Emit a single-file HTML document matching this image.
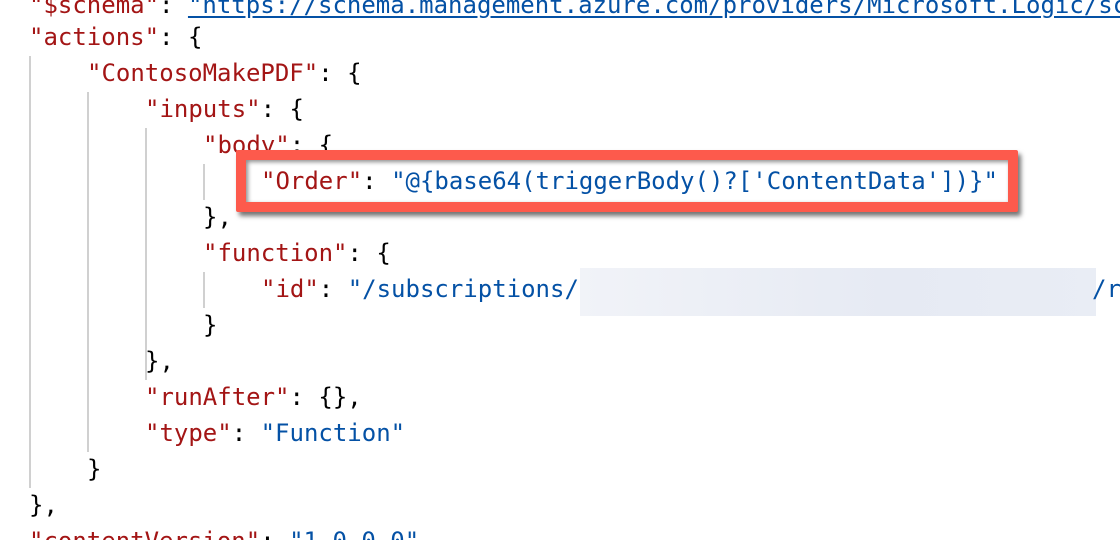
<!DOCTYPE html>
<html><head><meta charset="utf-8"><style>
html,body{margin:0;padding:0;background:#fff;width:1120px;height:540px;overflow:hidden;position:relative}
.l{position:absolute;left:0;height:36px;line-height:36px;font-family:"DejaVu Sans Mono","Liberation Mono",monospace;font-size:24px;white-space:pre;color:#000}
.k{color:#a31515}.s{color:#0451a5}
.u{color:#0451a5;text-decoration:underline;text-underline-offset:3px}
.g{position:absolute;width:2px;background:#d0d0d0}
</style></head><body>
<div class="g" style="left:29px;top:56px;height:432px"></div>
<div class="g" style="left:87px;top:92px;height:360px"></div>
<div class="g" style="left:145px;top:128px;height:252px"></div>
<div class="g" style="left:203px;top:164px;height:36px"></div>
<div class="g" style="left:203px;top:272px;height:36px"></div>

<div class="l" style="top:-13px;left:29px"><span class="k">"$schema"</span>: <span class="u">"https://schema.management.azure.com/providers/Microsoft.Logic/sc</span></div>
<div class="l" style="top:19px;left:29px"><span class="k">"actions"</span>: {</div>
<div class="l" style="top:55px;left:87px"><span class="k">"ContosoMakePDF"</span>: {</div>
<div class="l" style="top:91px;left:145px"><span class="k">"inputs"</span>: {</div>
<div class="l" style="top:127px;left:203px"><span class="k">"body"</span>: {</div>

<div style="position:absolute;left:236px;top:150px;width:762px;height:42px;border:10px solid #fd5a4c;border-radius:2px;background:#fff;box-shadow:3px 4px 5px rgba(0,0,0,.55), inset 2px 2px 4px rgba(0,0,0,.45)"></div>
<div class="l" style="top:163px;left:261px"><span class="k">"Order"</span>: <span class="s">"@{base64(triggerBody()?['ContentData'])}"</span></div>

<div class="l" style="top:199px;left:203px">},</div>
<div class="l" style="top:235px;left:203px"><span class="k">"function"</span>: {</div>
<div class="l" style="top:271px;left:261px"><span class="k">"id"</span>: <span class="s">"/subscriptions/</span></div>
<div style="position:absolute;left:580px;top:268px;width:516px;height:48px;background:linear-gradient(90deg,#f1f3f8,#e6eaf3 60%,#e9edf5)"></div>
<div class="l" style="top:271px;left:1092px"><span class="s">/r</span></div>
<div class="l" style="top:307px;left:203px">}</div>
<div class="l" style="top:343px;left:145px">},</div>
<div class="l" style="top:379px;left:145px"><span class="k">"runAfter"</span>: {},</div>
<div class="l" style="top:415px;left:145px"><span class="k">"type"</span>: <span class="s">"Function"</span></div>
<div class="l" style="top:451px;left:87px">}</div>
<div class="l" style="top:487px;left:29px">},</div>
<div class="l" style="top:523px;left:29px"><span class="k">"contentVersion"</span>: <span class="s">"1.0.0.0"</span></div>
</body></html>
